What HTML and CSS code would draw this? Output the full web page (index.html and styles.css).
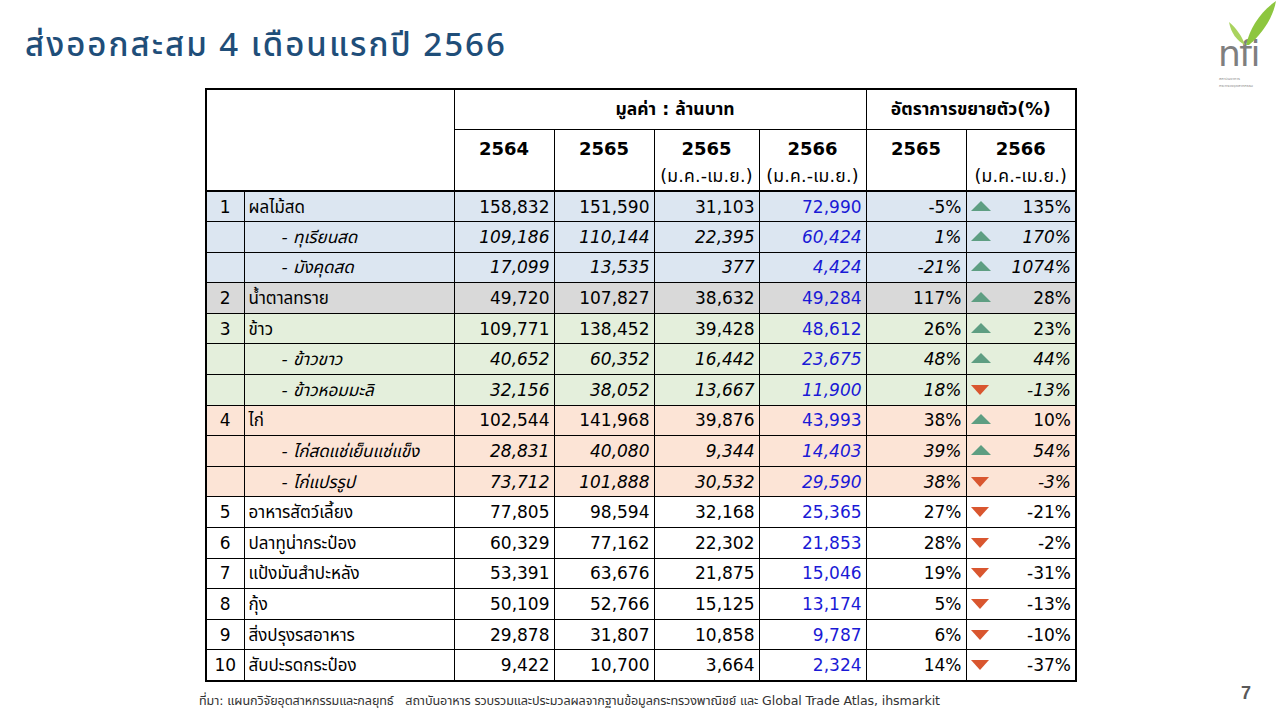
FILE: index.html
```html
<!DOCTYPE html>
<html lang="th">
<head>
<meta charset="utf-8">
<link rel="stylesheet" href="styles.css">
</head>
<body>
<div class="slide">
  <h1 class="title">ส่งออกสะสม 4 เดือนแรกปี 2566</h1>
  <div class="logo">
    <div class="nfi">nfi</div>
    <svg class="leaves" width="50" height="46" viewBox="0 0 50 46">
      <path d="M18 45 C 22 28, 32 12, 48 1 C 45 18, 34 34, 21 45 Z" fill="#8dc63f"/>
      <path d="M17 45 C 14 36, 8 28, 1 22 C 3 33, 9 41, 17 45 Z" fill="#a9d35e"/>
    </svg>
    <div class="logo-sub">สถาบันอาหาร</div>
    <div class="logo-sub l2">กระทรวงอุตสาหกรรม</div>
  </div>

  <div class="table-wrap">
    <table class="data">
      <colgroup>
        <col class="c-no"><col class="c-name"><col class="c-v"><col class="c-v"><col class="c-v2"><col class="c-v3"><col class="c-g"><col class="c-g2">
      </colgroup>
      <thead>
        <tr class="h1">
          <th colspan="2" rowspan="2" class="blank"></th>
          <th colspan="4">มูลค่า : ล้านบาท</th>
          <th colspan="2">อัตราการขยายตัว(%)</th>
        </tr>
        <tr class="h2">
          <th><span class="yr">2564</span><span class="per">&nbsp;</span></th>
          <th><span class="yr">2565</span><span class="per">&nbsp;</span></th>
          <th><span class="yr">2565</span><span class="per">(ม.ค.-เม.ย.)</span></th>
          <th><span class="yr">2566</span><span class="per">(ม.ค.-เม.ย.)</span></th>
          <th><span class="yr">2565</span><span class="per">&nbsp;</span></th>
          <th><span class="yr">2566</span><span class="per">(ม.ค.-เม.ย.)</span></th>
        </tr>
      </thead>
      <tbody>
        <tr class="blue first"><td class="no">1</td><td class="name">ผลไม้สด</td><td>158,832</td><td>151,590</td><td>31,103</td><td class="b">72,990</td><td>-5%</td><td class="gr"><span class="up"></span>135%</td></tr>
        <tr class="blue sub"><td class="no"></td><td class="name">- ทุเรียนสด</td><td>109,186</td><td>110,144</td><td>22,395</td><td class="b">60,424</td><td>1%</td><td class="gr"><span class="up"></span>170%</td></tr>
        <tr class="blue sub"><td class="no"></td><td class="name">- มังคุดสด</td><td>17,099</td><td>13,535</td><td>377</td><td class="b">4,424</td><td>-21%</td><td class="gr"><span class="up"></span>1074%</td></tr>
        <tr class="gray"><td class="no">2</td><td class="name">น้ำตาลทราย</td><td>49,720</td><td>107,827</td><td>38,632</td><td class="b">49,284</td><td>117%</td><td class="gr"><span class="up"></span>28%</td></tr>
        <tr class="green"><td class="no">3</td><td class="name">ข้าว</td><td>109,771</td><td>138,452</td><td>39,428</td><td class="b">48,612</td><td>26%</td><td class="gr"><span class="up"></span>23%</td></tr>
        <tr class="green sub"><td class="no"></td><td class="name">- ข้าวขาว</td><td>40,652</td><td>60,352</td><td>16,442</td><td class="b">23,675</td><td>48%</td><td class="gr"><span class="up"></span>44%</td></tr>
        <tr class="green sub"><td class="no"></td><td class="name">- ข้าวหอมมะลิ</td><td>32,156</td><td>38,052</td><td>13,667</td><td class="b">11,900</td><td>18%</td><td class="gr"><span class="down"></span>-13%</td></tr>
        <tr class="peach"><td class="no">4</td><td class="name">ไก่</td><td>102,544</td><td>141,968</td><td>39,876</td><td class="b">43,993</td><td>38%</td><td class="gr"><span class="up"></span>10%</td></tr>
        <tr class="peach sub"><td class="no"></td><td class="name">- ไก่สดแช่เย็นแช่แข็ง</td><td>28,831</td><td>40,080</td><td>9,344</td><td class="b">14,403</td><td>39%</td><td class="gr"><span class="up"></span>54%</td></tr>
        <tr class="peach sub"><td class="no"></td><td class="name">- ไก่แปรรูป</td><td>73,712</td><td>101,888</td><td>30,532</td><td class="b">29,590</td><td>38%</td><td class="gr"><span class="down"></span>-3%</td></tr>
        <tr><td class="no">5</td><td class="name">อาหารสัตว์เลี้ยง</td><td>77,805</td><td>98,594</td><td>32,168</td><td class="b">25,365</td><td>27%</td><td class="gr"><span class="down"></span>-21%</td></tr>
        <tr><td class="no">6</td><td class="name">ปลาทูน่ากระป๋อง</td><td>60,329</td><td>77,162</td><td>22,302</td><td class="b">21,853</td><td>28%</td><td class="gr"><span class="down"></span>-2%</td></tr>
        <tr><td class="no">7</td><td class="name">แป้งมันสำปะหลัง</td><td>53,391</td><td>63,676</td><td>21,875</td><td class="b">15,046</td><td>19%</td><td class="gr"><span class="down"></span>-31%</td></tr>
        <tr><td class="no">8</td><td class="name">กุ้ง</td><td>50,109</td><td>52,766</td><td>15,125</td><td class="b">13,174</td><td>5%</td><td class="gr"><span class="down"></span>-13%</td></tr>
        <tr><td class="no">9</td><td class="name">สิ่งปรุงรสอาหาร</td><td>29,878</td><td>31,807</td><td>10,858</td><td class="b">9,787</td><td>6%</td><td class="gr"><span class="down"></span>-10%</td></tr>
        <tr><td class="no">10</td><td class="name">สับปะรดกระป๋อง</td><td>9,422</td><td>10,700</td><td>3,664</td><td class="b">2,324</td><td>14%</td><td class="gr"><span class="down"></span>-37%</td></tr>
      </tbody>
    </table>
    <p class="source">ที่มา: แผนกวิจัยอุตสาหกรรมและกลยุทธ์&nbsp;&nbsp; สถาบันอาหาร รวบรวมและประมวลผลจากฐานข้อมูลกระทรวงพาณิชย์ และ Global Trade Atlas, ihsmarkit</p>
  </div>
  <div class="pagenum">7</div>
</div>
</body>
</html>
```

FILE: styles.css
```css
* { box-sizing: border-box; }
html, body { margin: 0; padding: 0; background: #fff; }
body { font-family: "DejaVu Sans", "Noto Sans Thai", "Noto Sans", sans-serif; color: #000; }

.slide { position: relative; width: 1280px; height: 720px; overflow: hidden; }

.title {
  margin: 0;
  padding: 22px 0 0 25px;
  height: 88px;
  font-family: "Noto Sans", "Noto Sans Thai", "DejaVu Sans", sans-serif;
  font-weight: 500;
  font-size: 33px;
  line-height: 44px;
  letter-spacing: 2px;
  color: #1f4e79;
}

.logo { position: absolute; left: 1212px; top: 0; width: 68px; height: 90px; }
.leaves { position: absolute; left: 16px; top: 0; }
.nfi {
  position: absolute; left: 6px; top: 39px;
  font-family: "DejaVu Sans", sans-serif; font-size: 36px; line-height: 30px;
  color: #7f7f7f; letter-spacing: -1.5px;
}
.logo-sub {
  position: absolute; left: 7px; top: 76px;
  font-size: 4px; line-height: 6.5px; color: #8a8a8a; white-space: nowrap;
}
.logo-sub.l2 { top: 82.5px; }

.table-wrap { padding-left: 205px; }

.data {
  border-collapse: collapse;
  table-layout: fixed;
  width: 870px;
  border: 2px solid #000;
  font-size: 17px;
}
.c-no { width: 38px; }
.c-name { width: 210px; }
.c-v { width: 100px; }
.c-v2 { width: 105px; }
.c-v3 { width: 107px; }
.c-g { width: 100px; }
.c-g2 { width: 110px; }

.data th, .data td { border: 1px solid #000; padding: 0; }
.data thead tr:last-child th, .data thead th.blank { border-bottom: 2px solid #000; }

.h1 th { height: 40px; font-weight: bold; text-align: center; font-size: 17.5px; }
.h1 th[colspan="4"] { text-align: center; padding-left: 30px; }
.h2 th { height: 62px; vertical-align: top; text-align: center; font-weight: bold; }
.h2 .yr { display: block; font-size: 18px; line-height: 22px; padding-top: 8px; }
.h2 .per { display: block; font-weight: normal; font-size: 17.5px; line-height: 24px; padding-top: 4px; white-space: nowrap; letter-spacing: 0.2px; }

.data tbody tr { height: 30.6px; }
.data tbody td { text-align: right; padding-right: 4px; white-space: nowrap; line-height: 20px; }
.data tbody td.no { text-align: center; padding-right: 0; }
.data tbody td.name { text-align: left; padding-left: 4px; }
.data tbody tr.sub td { font-style: italic; }
.data tbody tr.sub td.name { padding-left: 37px; }
.data tbody td.b { color: #1a1ad6; }

.data tbody td.gr { position: relative; }
.up, .down { position: absolute; left: 4px; top: 50%; width: 0; height: 0; }
.up {
  margin-top: -6px;
  border-left: 10px solid transparent;
  border-right: 10px solid transparent;
  border-bottom: 10px solid #5e9e82;
}
.down {
  margin-top: -5px;
  border-left: 9px solid transparent;
  border-right: 9px solid transparent;
  border-top: 10px solid #d9562f;
}

tr.blue td { background: #dce6f1; }
tr.gray td { background: #d9d9d9; }
tr.green td { background: #e4efdc; }
tr.peach td { background: #fce4d6; }

.source {
  margin: 10px 0 0 -6px;
  font-size: 12.6px;
  color: #333;
  letter-spacing: -0.1px;
}

.pagenum {
  position: absolute; left: 1241px; top: 683px;
  font-family: "Liberation Sans", sans-serif; font-weight: bold; font-size: 18px; color: #595959;
}
```
